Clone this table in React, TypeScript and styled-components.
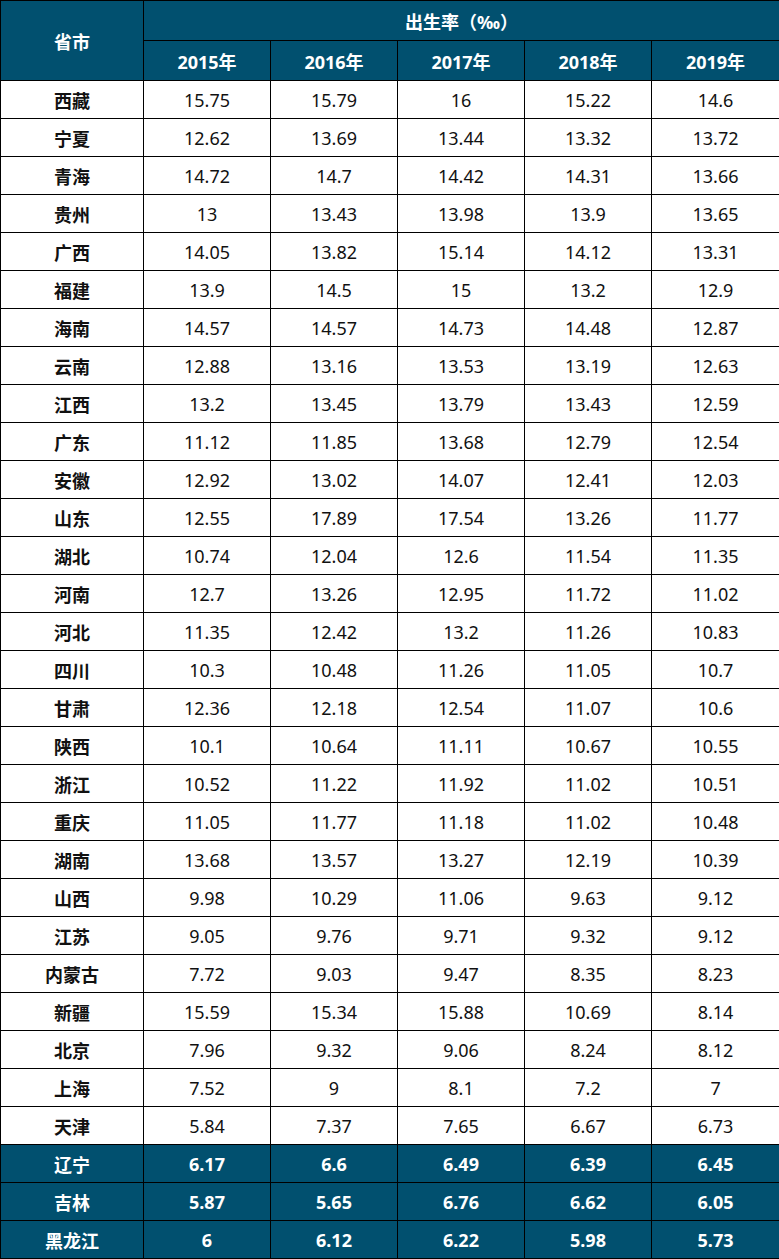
import styled, { createGlobalStyle } from "styled-components";

const GlobalStyle = createGlobalStyle`
  html, body {
    margin: 0;
    padding: 0;
    background: #ffffff;
  }
  body {
    font-family: "Noto Sans", "Noto Sans CJK SC", sans-serif;
  }
`;

const HEAD = "#01506f";

const Table = styled.table`
  width: 779px;
  border-collapse: collapse;
  table-layout: fixed;
  font-size: 18px;
`;

const Col = styled.col<{ $w: number }>`
  width: ${({ $w }) => $w}px;
`;

const HeadCell = styled.th`
  background: ${HEAD};
  color: #ffffff;
  border: 1px solid #000000;
  font-weight: 700;
  font-family: "Noto Sans", "Noto Sans CJK SC", sans-serif;
  text-align: center;
  padding: 0;
  height: 39px;
`;

const Row = styled.tr<{ $dark: boolean }>`
  height: 38px;
  background: ${({ $dark }) => ($dark ? HEAD : "#ffffff")};
  color: ${({ $dark }) => ($dark ? "#ffffff" : "#111111")};
`;

const NameCell = styled.td`
  border: 1px solid #000000;
  text-align: center;
  font-weight: 700;
  font-family: "Noto Sans CJK SC", sans-serif;
  padding: 0;
`;

const ValueCell = styled.td<{ $dark: boolean }>`
  border: 1px solid #000000;
  text-align: center;
  font-weight: ${({ $dark }) => ($dark ? 700 : 400)};
  padding: 0;
`;

const colWidths = [143, 127, 127, 127, 127, 128];

const years = ["2015年", "2016年", "2017年", "2018年", "2019年"];

const rows: [string, string[]][] = [
  ["西藏", ["15.75", "15.79", "16", "15.22", "14.6"]],
  ["宁夏", ["12.62", "13.69", "13.44", "13.32", "13.72"]],
  ["青海", ["14.72", "14.7", "14.42", "14.31", "13.66"]],
  ["贵州", ["13", "13.43", "13.98", "13.9", "13.65"]],
  ["广西", ["14.05", "13.82", "15.14", "14.12", "13.31"]],
  ["福建", ["13.9", "14.5", "15", "13.2", "12.9"]],
  ["海南", ["14.57", "14.57", "14.73", "14.48", "12.87"]],
  ["云南", ["12.88", "13.16", "13.53", "13.19", "12.63"]],
  ["江西", ["13.2", "13.45", "13.79", "13.43", "12.59"]],
  ["广东", ["11.12", "11.85", "13.68", "12.79", "12.54"]],
  ["安徽", ["12.92", "13.02", "14.07", "12.41", "12.03"]],
  ["山东", ["12.55", "17.89", "17.54", "13.26", "11.77"]],
  ["湖北", ["10.74", "12.04", "12.6", "11.54", "11.35"]],
  ["河南", ["12.7", "13.26", "12.95", "11.72", "11.02"]],
  ["河北", ["11.35", "12.42", "13.2", "11.26", "10.83"]],
  ["四川", ["10.3", "10.48", "11.26", "11.05", "10.7"]],
  ["甘肃", ["12.36", "12.18", "12.54", "11.07", "10.6"]],
  ["陕西", ["10.1", "10.64", "11.11", "10.67", "10.55"]],
  ["浙江", ["10.52", "11.22", "11.92", "11.02", "10.51"]],
  ["重庆", ["11.05", "11.77", "11.18", "11.02", "10.48"]],
  ["湖南", ["13.68", "13.57", "13.27", "12.19", "10.39"]],
  ["山西", ["9.98", "10.29", "11.06", "9.63", "9.12"]],
  ["江苏", ["9.05", "9.76", "9.71", "9.32", "9.12"]],
  ["内蒙古", ["7.72", "9.03", "9.47", "8.35", "8.23"]],
  ["新疆", ["15.59", "15.34", "15.88", "10.69", "8.14"]],
  ["北京", ["7.96", "9.32", "9.06", "8.24", "8.12"]],
  ["上海", ["7.52", "9", "8.1", "7.2", "7"]],
  ["天津", ["5.84", "7.37", "7.65", "6.67", "6.73"]],
  ["辽宁", ["6.17", "6.6", "6.49", "6.39", "6.45"]],
  ["吉林", ["5.87", "5.65", "6.76", "6.62", "6.05"]],
  ["黑龙江", ["6", "6.12", "6.22", "5.98", "5.73"]],
];

const darkRows = new Set(["辽宁", "吉林", "黑龙江"]);

export default function App() {
  return (
    <>
      <GlobalStyle />
      <Table>
        <colgroup>
          {colWidths.map((w, i) => (
            <Col key={i} $w={w} />
          ))}
        </colgroup>
        <thead>
          <tr>
            <HeadCell rowSpan={2}>省市</HeadCell>
            <HeadCell colSpan={5}>出生率（‰）</HeadCell>
          </tr>
          <tr>
            {years.map((y) => (
              <HeadCell key={y}>{y}</HeadCell>
            ))}
          </tr>
        </thead>
        <tbody>
          {rows.map(([name, values]) => {
            const dark = darkRows.has(name);
            return (
              <Row key={name} $dark={dark}>
                <NameCell>{name}</NameCell>
                {values.map((v, i) => (
                  <ValueCell key={i} $dark={dark}>
                    {v}
                  </ValueCell>
                ))}
              </Row>
            );
          })}
        </tbody>
      </Table>
    </>
  );
}
